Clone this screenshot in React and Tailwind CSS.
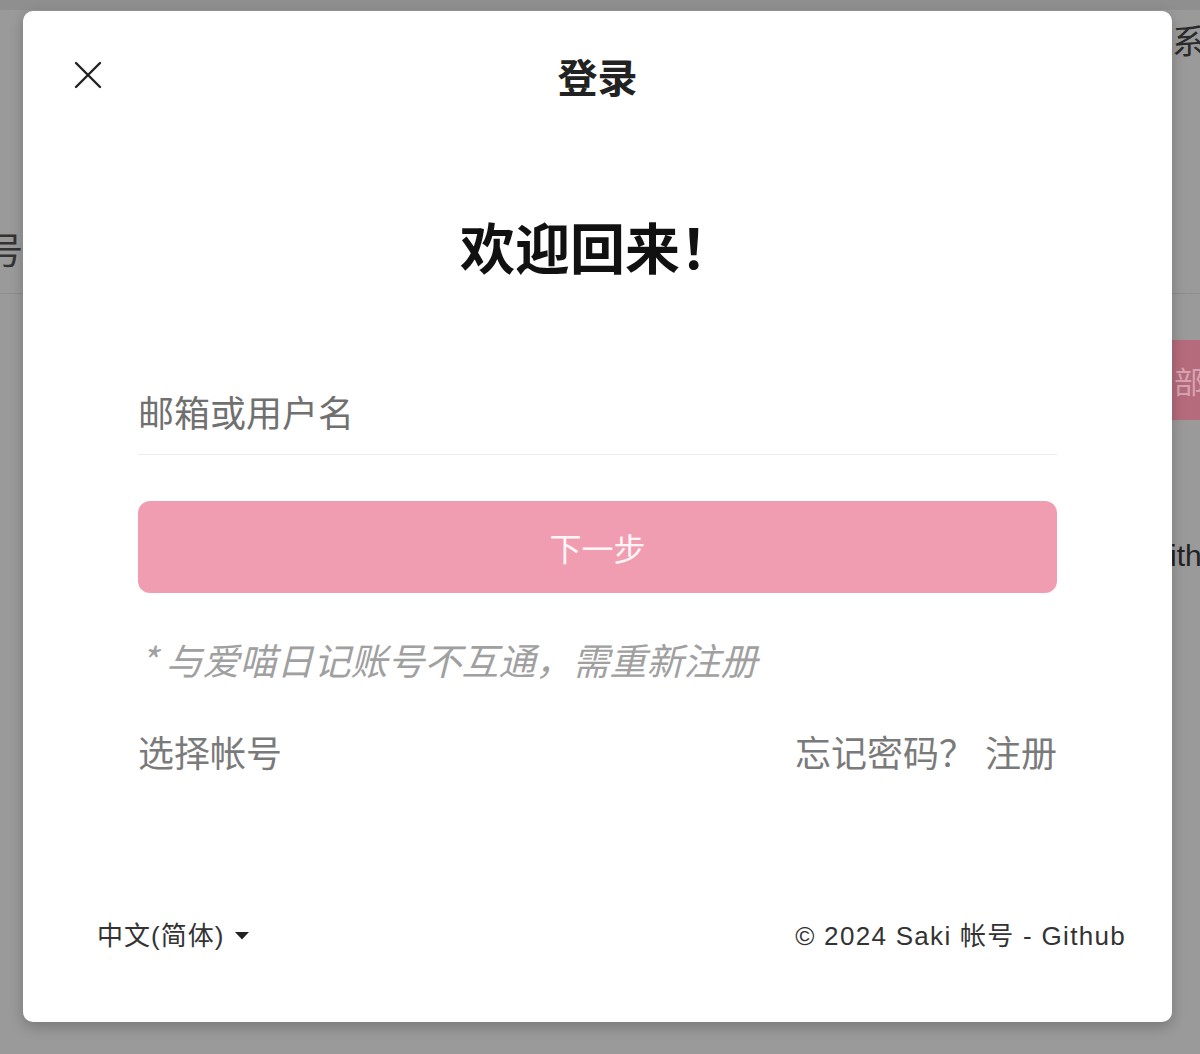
import React, { useState } from 'react';

const cjk = "font-['Noto_Sans_CJK_SC',sans-serif]";

function CloseIcon() {
  return (
    <svg width="28" height="28" viewBox="0 0 28 28" fill="none" stroke="#222" strokeWidth="2.4" strokeLinecap="round">
      <path d="M2 2 L26 26" />
      <path d="M26 2 L2 26" />
    </svg>
  );
}

// 背后页面（被遮罩盖住，只露出边缘）
function Backdrop() {
  return (
    <div className={`h-[1054px] w-full overflow-hidden bg-[#9a9a9a] text-[#2a2a2a] ${cjk}`}>
      <div className="h-[10px] bg-[#8f8f8f]" />
      <div className="flex h-[284px] border-b border-[#8d8d8d]">
        <div className="flex w-[23px] justify-end overflow-hidden whitespace-nowrap pt-[216px] text-[36px] leading-[44px] text-[#333]">
          帐号
        </div>
        <div className="flex-1" />
        <div className="w-[28px] overflow-hidden whitespace-nowrap pt-[10px] text-[34px] leading-[40px]">
          系统
        </div>
      </div>
      <div className="flex justify-end">
        <div className="w-[28px] overflow-hidden whitespace-nowrap">
          <div className="mt-[46px] flex h-[80px] items-center bg-[#b56b7c] pl-[2px] text-[30px] text-[#d6a3af]">
            部分
          </div>
          <div className="-ml-[2px] mt-[118px] font-['Liberation_Sans',sans-serif] text-[30px] leading-[36px] text-[#222]">
            ithub
          </div>
        </div>
      </div>
    </div>
  );
}

export default function App() {
  const [account, setAccount] = useState('');

  return (
    <div className="relative h-[1054px] w-full overflow-hidden">
      <Backdrop />

      {/* 登录弹窗 */}
      <div className={`absolute left-[23px] top-[11px] flex h-[1011px] w-[1149px] flex-col rounded-[10px] bg-white shadow-[0_5px_14px_rgba(0,0,0,0.22)] ${cjk}`}>
        <div className="mt-[43px] grid h-[44px] grid-cols-[1fr_auto_1fr] items-center">
          <button className="ml-[51px] mt-[-3px] flex h-[28px] w-[28px] items-center justify-center">
            <CloseIcon />
          </button>
          <h1 className="text-[40px] font-bold leading-[44px] text-[#222]">登录</h1>
          <div />
        </div>

        <h2 className="mt-[115px] text-center text-[55px] font-bold leading-[64px] text-[#111]">
          欢迎回来！
        </h2>

        <div className="flex flex-col px-[115px]">
          <div className="mt-[112px] border-b border-[#ececec] pb-[21px]">
            <input
              value={account}
              onChange={(e) => setAccount(e.target.value)}
              placeholder="邮箱或用户名"
              className="h-[44px] w-full bg-transparent p-0 text-[36px] leading-[44px] text-[#333] outline-none placeholder:text-[#707070]"
            />
          </div>

          <button className="mt-[46px] flex h-[92px] w-full items-center justify-center rounded-[12px] bg-[#f19db1] text-[32px] text-white/90">
            下一步
          </button>

          <p className="mt-[44px] pl-[2px] text-[37px] italic leading-[44px] text-[#a0a0a0]">
            * 与爱喵日记账号不互通，需重新注册
          </p>

          <div className="mt-[48px] flex items-center justify-between text-[36px] leading-[44px] text-[#7a7a7a]">
            <a>选择帐号</a>
            <div className="flex gap-[10px]">
              <a>忘记密码？</a>
              <a>注册</a>
            </div>
          </div>
        </div>

        <div className="mt-auto flex items-center justify-between pb-[68px] pl-[74px] pr-[46px] font-['Liberation_Sans','Noto_Sans_CJK_SC',sans-serif] text-[26px] leading-[36px] tracking-[1px] text-[#333]">
          <div className="flex items-center gap-[11px]">
            <span>中文(简体)</span>
            <svg width="14" height="8" viewBox="0 0 14 8">
              <path d="M0 0 H14 L7 7.5 Z" fill="#222" />
            </svg>
          </div>
          <div className="tracking-[1.3px]">© 2024 Saki 帐号 - Github</div>
        </div>
      </div>
    </div>
  );
}
